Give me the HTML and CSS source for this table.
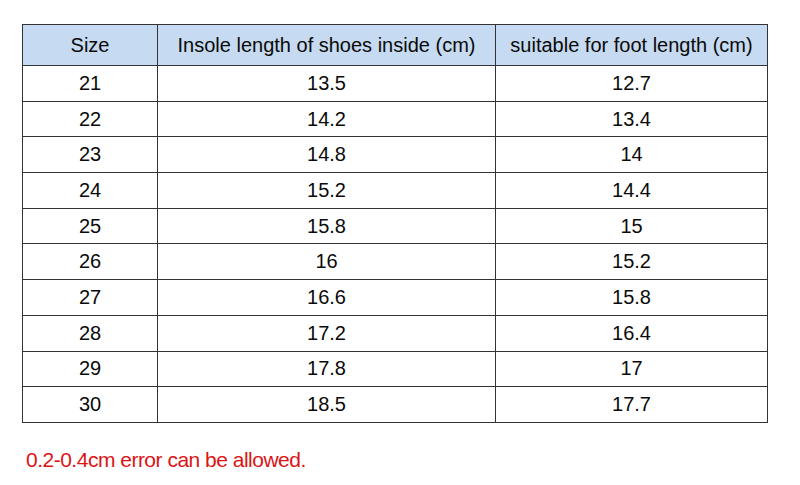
FILE: index.html
```html
<!DOCTYPE html>
<html>
<head>
<meta charset="utf-8">
<link rel="stylesheet" href="styles.css">
</head>
<body>
<div class="page">
<table class="sizes">
<colgroup><col class="c1"><col class="c2"><col class="c3"></colgroup>
<thead>
<tr><th>Size</th><th>Insole length of shoes inside (cm)</th><th>suitable for foot length (cm)</th></tr>
</thead>
<tbody>
<tr><td>21</td><td>13.5</td><td>12.7</td></tr>
<tr><td>22</td><td>14.2</td><td>13.4</td></tr>
<tr><td>23</td><td>14.8</td><td>14</td></tr>
<tr><td>24</td><td>15.2</td><td>14.4</td></tr>
<tr><td>25</td><td>15.8</td><td>15</td></tr>
<tr><td>26</td><td>16</td><td>15.2</td></tr>
<tr><td>27</td><td>16.6</td><td>15.8</td></tr>
<tr><td>28</td><td>17.2</td><td>16.4</td></tr>
<tr><td>29</td><td>17.8</td><td>17</td></tr>
<tr><td>30</td><td>18.5</td><td>17.7</td></tr>
</tbody>
</table>
<p class="note">0.2-0.4cm error can be allowed.</p>
</div>
</body>
</html>
```
FILE: styles.css
```css
html, body {
  margin: 0;
  padding: 0;
  background: #fff;
}
body {
  font-family: "Liberation Sans", Arial, sans-serif;
  color: #0a0a0a;
}
.page {
  padding: 24px 0 0 22px;
}
.sizes {
  border-collapse: collapse;
  table-layout: fixed;
  width: 745px;
  font-size: 20px;
}
.c1 { width: 135px; }
.c2 { width: 338px; }
.c3 { width: 272px; }
.sizes th, .sizes td {
  border: 1.5px solid #333;
  text-align: center;
  padding: 0;
  font-weight: normal;
  height: 35.7px;
  box-sizing: border-box;
}
.sizes th {
  background: #c6dbf1;
  height: 41px;
}
.note {
  margin: 25px 0 0 4px;
  color: #dc1414;
  font-size: 21px;
  letter-spacing: -0.5px;
}
```
